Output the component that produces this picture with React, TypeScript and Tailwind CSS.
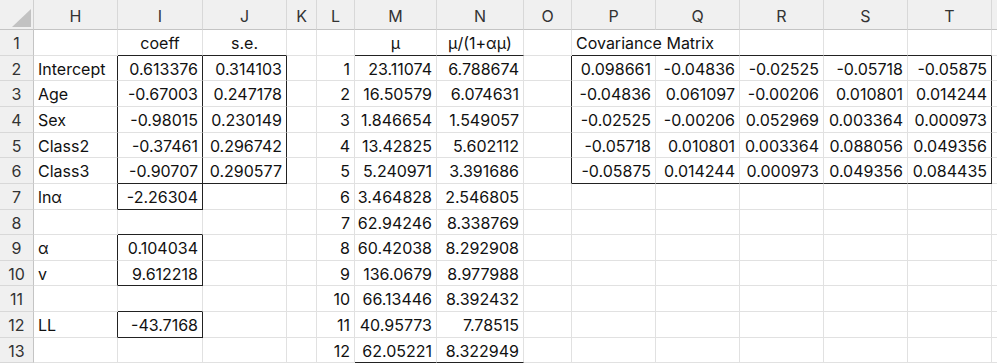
import React from "react";

/* Excel-like sheet: H..T columns, rows 1-13 */

const COLS = ["H", "I", "J", "K", "L", "M", "N", "O", "P", "Q", "R", "S", "T", ""];
const ROW_H = [26, 25, 26, 26, 25, 26, 26, 25, 26, 25, 26, 26, 25];

type Cell = {
  v?: string;
  align?: "l" | "c" | "r";
  dr?: boolean; // dark right border
  db?: boolean; // dark bottom border
  span?: number;
};

const labels = ["Intercept", "Age", "Sex", "Class2", "Class3"];
const coeff = ["0.613376", "-0.67003", "-0.98015", "-0.37461", "-0.90707"];
const se = ["0.314103", "0.247178", "0.230149", "0.296742", "0.290577"];

const mu = [
  ["23.11074", "6.788674"],
  ["16.50579", "6.074631"],
  ["1.846654", "1.549057"],
  ["13.42825", "5.602112"],
  ["5.240971", "3.391686"],
  ["3.464828", "2.546805"],
  ["62.94246", "8.338769"],
  ["60.42038", "8.292908"],
  ["136.0679", "8.977988"],
  ["66.13446", "8.392432"],
  ["40.95773", "7.78515"],
  ["62.05221", "8.322949"],
];

const cov = [
  ["0.098661", "-0.04836", "-0.02525", "-0.05718", "-0.05875"],
  ["-0.04836", "0.061097", "-0.00206", "0.010801", "0.014244"],
  ["-0.02525", "-0.00206", "0.052969", "0.003364", "0.000973"],
  ["-0.05718", "0.010801", "0.003364", "0.088056", "0.049356"],
  ["-0.05875", "0.014244", "0.000973", "0.049356", "0.084435"],
];

function buildRows(): Cell[][] {
  const rows: Cell[][] = [];

  // row 1
  rows.push([
    {},
    { v: "coeff", align: "c", db: true },
    { v: "s.e.", align: "c", db: true },
    {},
    {},
    { v: "μ", align: "c", db: true },
    { v: "μ/(1+αμ)", align: "c", db: true },
    {},
    { v: "Covariance Matrix", align: "l", db: true, span: 2 },
    { db: true },
    { db: true },
    { db: true },
    {},
  ]);

  for (let r = 2; r <= 13; r++) {
    const i = r - 2;
    const row: Cell[] = [];
    const m = mu[i];

    // H, I, J
    if (r <= 6) {
      row.push({ v: labels[i], dr: true });
      row.push({ v: coeff[i], align: "r", dr: true, db: r === 6 });
      row.push({ v: se[i], align: "r", dr: true, db: r === 6 });
    } else {
      const left: Record<number, [string, string]> = {
        7: ["lnα", "-2.26304"],
        9: ["α", "0.104034"],
        10: ["v", "9.612218"],
        12: ["LL", "-43.7168"],
      };
      const boxed = left[r];
      const darkBottom = r === 7 || r === 8 || r === 10 || r === 11 || r === 12;
      row.push({ v: boxed?.[0], dr: !!boxed });
      row.push({ v: boxed?.[1], align: "r", dr: !!boxed, db: darkBottom });
      row.push({});
    }

    // K
    row.push({});
    // L, M, N
    row.push({ v: String(i + 1), align: "r" });
    row.push({ v: m[0], align: "r", db: r === 13 });
    row.push({ v: m[1], align: "r", db: r === 13 });

    // O, P..T
    if (r <= 6) {
      row.push({ dr: true });
      cov[i].forEach((c, k) =>
        row.push({ v: c, align: "r", dr: k === 4, db: r === 6 })
      );
    } else {
      row.push({});
      for (let k = 0; k < 5; k++) row.push({});
    }
    row.push({});
    rows.push(row);
  }
  return rows;
}

function SheetCell({ cell, h }: { cell: Cell; h: number }) {
  const align =
    cell.align === "r" ? "justify-end" : cell.align === "c" ? "justify-center" : "justify-start";
  return (
    <div
      className={`flex items-center overflow-visible whitespace-nowrap border-r border-b px-[4px] pt-[1px] text-[16px] text-[#111] ${align} ${
        cell.dr ? "border-r-[#222]" : "border-r-[#e1e1e1]"
      } ${cell.db ? "border-b-[#222]" : "border-b-[#e1e1e1]"} ${
        cell.span === 2 ? "col-span-2" : ""
      }`}
      style={{ height: h }}
    >
      {cell.v}
    </div>
  );
}

export default function App() {
  const rows = buildRows();

  return (
    <div
      className="h-[363px] w-[997px] overflow-hidden bg-white"
      style={{ fontFamily: "Inter, 'Liberation Sans', sans-serif" }}
    >
      <div className="grid grid-cols-[34px_84px_85px_84px_30px_38px_82px_87px_48px_84px_84px_84px_84px_84px_1fr]">
        {/* column headers */}
        <div className="relative h-[30px] border-r border-b border-r-[#d0d0d0] border-b-[#c4c4c4] bg-[#f0f0f0]">
          <div className="absolute bottom-[2px] right-[2px] h-0 w-0 border-b-[18px] border-l-[19px] border-b-[#c2c2c2] border-l-transparent" />
        </div>
        {COLS.map((c, idx) => (
          <div
            key={idx}
            className="flex h-[30px] items-center justify-center border-r border-b border-r-[#d8d8d8] border-b-[#c4c4c4] bg-[#f0f0f0] pt-[2px] text-[16px] text-[#333]"
          >
            {c}
          </div>
        ))}

        {rows.map((row, r) => (
          <React.Fragment key={r}>
            <div
              className="flex items-center justify-center border-r border-b border-r-[#c4c4c4] border-b-[#d8d8d8] bg-[#f0f0f0] pt-[1px] text-[16px] text-[#333]"
              style={{ height: ROW_H[r] }}
            >
              {r + 1}
            </div>
            {row.map((cell, k) => (
              <SheetCell key={k} cell={cell} h={ROW_H[r]} />
            ))}
          </React.Fragment>
        ))}
      </div>
    </div>
  );
}
